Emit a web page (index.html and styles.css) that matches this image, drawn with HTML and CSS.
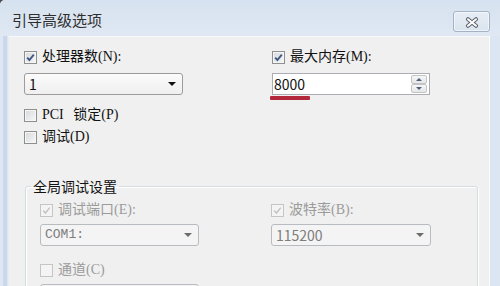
FILE: index.html
```html
<!DOCTYPE html>
<html lang="zh-CN">
<head>
<meta charset="utf-8">
<title>引导高级选项</title>
<link rel="stylesheet" href="styles.css">
</head>
<body>
<div class="window">
  <div class="titlebar">
    <span class="title">引导高级选项</span>
    <button class="close" type="button" aria-label="关闭">
      <svg width="14" height="11" viewBox="0 0 14 11"><g stroke-linecap="round" fill="none"><path d="M3 2.2 L11 8.8 M11 2.2 L3 8.8" stroke="#5b6068" stroke-width="4"/><path d="M3 2.2 L11 8.8 M11 2.2 L3 8.8" stroke="#ffffff" stroke-width="2"/></g></svg>
    </button>
  </div>
  <div class="frame">
    <div class="client">
      <div class="pair top">
        <div class="field">
          <label class="check"><span class="cb"><svg viewBox="0 0 11 11" width="11" height="11"><path d="M2.2 5.6 L4.4 8 L8.8 2.6" class="tick"/></svg></span><span class="lbl">处理器数(N):</span></label>
          <div class="combo w159"><span class="val">1</span><span class="arrow"></span></div>
        </div>
        <div class="field">
          <label class="check"><span class="cb"><svg viewBox="0 0 11 11" width="11" height="11"><path d="M2.2 5.6 L4.4 8 L8.8 2.6" class="tick"/></svg></span><span class="lbl">最大内存(M):</span></label>
          <div class="spin"><span class="val">8000</span><span class="spinbtns"><span class="sbtn"><span class="up"></span></span><span class="sbtn"><span class="down"></span></span></span></div>
          <div class="redline"></div>
        </div>
      </div>
      <div class="checks">
        <label class="check"><span class="cb"></span><span class="lbl pci">PCI 锁定(P)</span></label>
        <label class="check"><span class="cb"></span><span class="lbl">调试(D)</span></label>
      </div>
      <fieldset class="group">
        <legend>全局调试设置</legend>
        <div class="gbody">
          <div class="pair inner">
            <div class="field">
              <label class="check dis"><span class="cb"><svg viewBox="0 0 11 11" width="11" height="11"><path d="M2.2 5.6 L4.4 8 L8.8 2.6" class="tick"/></svg></span><span class="lbl">调试端口(E):</span></label>
              <div class="combo dis w159"><span class="val mono">COM1:</span><span class="arrow"></span></div>
            </div>
            <div class="field">
              <label class="check dis"><span class="cb"><svg viewBox="0 0 11 11" width="11" height="11"><path d="M2.2 5.6 L4.4 8 L8.8 2.6" class="tick"/></svg></span><span class="lbl">波特率(B):</span></label>
              <div class="combo dis w160"><span class="val">115200</span><span class="arrow"></span></div>
            </div>
          </div>
          <div class="field lone">
            <label class="check dis"><span class="cb"></span><span class="lbl">通道(C)</span></label>
            <div class="combo dis w159"><span class="val"></span><span class="arrow"></span></div>
          </div>
        </div>
      </fieldset>
    </div>
  </div>
</div>
</body>
</html>
```
FILE: styles.css
```css
* { box-sizing: border-box; }
html, body { margin: 0; padding: 0; }
body {
  background: #4a4a4a;
  font-family: "Noto Sans CJK SC", "Noto Sans", sans-serif;
  font-size: 14px;
  color: #111;
}
.window {
  width: 500px;
  height: 286px;
  overflow: hidden;
  display: flex;
  flex-direction: column;
  background: #dbe6f2;
  border-top-left-radius: 5px;
}
.titlebar {
  height: 36px;
  flex: none;
  display: flex;
  align-items: flex-start;
  padding: 0 10px 0 12px;
  background: linear-gradient(#d6e2ef, #dfe8f3);
}
.title {
  padding-top: 10px;
  line-height: 20px;
  font-size: 15px;
  color: #2e2e2e;
}
.close {
  margin: 11px 0 0 auto;
  width: 37px;
  height: 21px;
  padding: 0;
  border: 1px solid #a3b3c7;
  border-radius: 3px;
  background: linear-gradient(#e6edf5, #dbe4ee);
  box-shadow: inset 0 0 0 1px rgba(255,255,255,0.55);
  display: flex;
  align-items: center;
  justify-content: center;
}
.close svg { display: block; margin-top: 1px; }
.frame {
  flex: 1;
  display: flex;
  padding: 0 10px 0 8px;
  background: linear-gradient(90deg, #dde8f4 0, #dde8f4 3px, #c9d8eb 3px, #c9d8eb 7px, #dbe6f2 7px);
  min-height: 0;
}
.client {
  flex: 1;
  background: #f0f0f0;
  border-top: 1px solid #f7f9fb;
  border-left: 1px solid #e9edf2;
  border-right: 1px solid #fafbfc;
  min-width: 0;
}
.pair {
  display: grid;
}
.pair.top {
  grid-template-columns: 248px 158px;
  padding: 10px 0 0 15px;
}
.field {
  display: flex;
  flex-direction: column;
  align-items: flex-start;
}
.check {
  height: 20px;
  display: flex;
  align-items: center;
  gap: 5px;
  line-height: 20px;
  white-space: nowrap;
}
.lbl {
  font-family: "Liberation Serif", "Noto Sans CJK SC", serif;
}
.cb {
  width: 13px;
  height: 13px;
  flex: none;
  border: 1px solid #8e8f8f;
  background: linear-gradient(135deg, #d6d8db, #f8f8f8);
  box-shadow: inset 0 0 0 1px #f6f6f6;
  display: flex;
  align-items: center;
  justify-content: center;
}
.cb svg { display: block; }
.tick {
  fill: none;
  stroke: #3f5888;
  stroke-width: 1.9;
}
.check.dis { color: #9b9b9b; }
.check.dis .cb {
  border-color: #c5c5c5;
  background: #f4f4f4;
  box-shadow: none;
}
.check.dis .tick { stroke: #c3c3c3; stroke-width: 1.5; }
.pci { word-spacing: 6px; }
.combo {
  margin-top: 6px;
  height: 22px;
  display: flex;
  align-items: center;
  justify-content: space-between;
  padding: 0 6px 0 4px;
  border: 1px solid #9c9c9c;
  border-radius: 3px;
  background: linear-gradient(#fbfbfb, #efefef);
  line-height: 20px;
}
.w159 { width: 159px; }
.w160 { width: 160px; }
.mono { font-family: "Liberation Mono", monospace; font-size: 13px; }
.arrow {
  width: 0;
  height: 0;
  border-left: 4px solid transparent;
  border-right: 4px solid transparent;
  border-top: 4px solid #111;
}
.combo.dis {
  margin-top: 4px;
  border-color: #b8bcc0;
  background: #f4f4f4;
  color: #7d7d7d;
}
.combo.dis .arrow { border-top-color: #6c6c6c; }
.spin {
  margin-top: 6px;
  width: 158px;
  height: 22px;
  display: flex;
  align-items: center;
  border: 1px solid #abadb3;
  background: #fff;
  padding: 0 2px 0 1px;
  line-height: 20px;
}
.spin .val { flex: 1; }
.spinbtns {
  width: 16px;
  height: 18px;
  display: flex;
  flex-direction: column;
}
.sbtn {
  flex: 1;
  display: flex;
  align-items: center;
  justify-content: center;
  border: 1px solid #c2c4c8;
  border-radius: 2px;
  background: linear-gradient(#f7f7f7, #e6e6e6);
}
.up, .down {
  width: 0;
  height: 0;
  border-left: 3px solid transparent;
  border-right: 3px solid transparent;
}
.up { border-bottom: 3px solid #4f6078; }
.down { border-top: 3px solid #4f6078; }
.redline {
  margin: 1px 0 0 -2px;
  width: 40px;
  height: 4px;
  background: #b3283b;
  border-radius: 1px;
}
.checks {
  display: flex;
  flex-direction: column;
  gap: 2px;
  padding: 5px 0 0 15px;
}
.group {
  margin: 29px 11px 0 16px;
  padding: 4px 0 0 0;
  min-width: 0;
  border: 1px solid #d3dce3;
  border-radius: 3px;
  box-shadow: inset 1px 1px 0 #ffffff, 1px 1px 0 #ffffff;
}
.group legend {
  margin-left: 5px;
  padding: 0 2px;
  line-height: 20px;
  font-size: 14px;
  color: #111;
}
.gbody { padding-left: 14px; }
.pair.inner { grid-template-columns: 231px 160px; }
.lone { margin-top: 14px; }
```
